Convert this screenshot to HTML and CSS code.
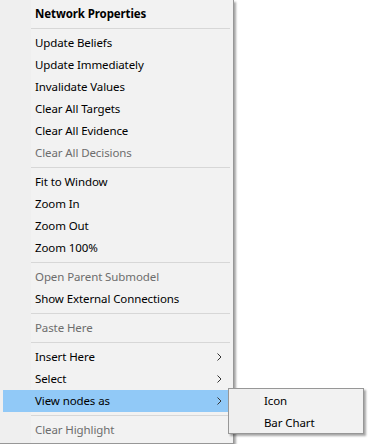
FILE: index.html
```html
<!DOCTYPE html>
<html lang="en">
<head>
    <meta charset="UTF-8">
    <meta name="viewport" content="width=device-width, initial-scale=1.0">
    <title>Context Menu</title>
    <link rel="stylesheet" href="styles.css">
</head>
<body>
    <div class="menu">
        <div class="item bold">Network Properties</div>
        <div class="sep"></div>
        <div class="item">Update Beliefs</div>
        <div class="item">Update Immediately</div>
        <div class="item">Invalidate Values</div>
        <div class="item">Clear All Targets</div>
        <div class="item">Clear All Evidence</div>
        <div class="item disabled">Clear All Decisions</div>
        <div class="sep"></div>
        <div class="item">Fit to Window</div>
        <div class="item">Zoom In</div>
        <div class="item">Zoom Out</div>
        <div class="item">Zoom 100%</div>
        <div class="sep"></div>
        <div class="item disabled">Open Parent Submodel</div>
        <div class="item">Show External Connections</div>
        <div class="sep"></div>
        <div class="item disabled">Paste Here</div>
        <div class="sep"></div>
        <div class="item has-sub">Insert Here
            <svg class="arrow" width="5" height="8" viewBox="0 0 5 8"><polyline points="0.5,0.5 4,4 0.5,7.5" fill="none" stroke="#333" stroke-width="1"/></svg>
        </div>
        <div class="item has-sub">Select
            <svg class="arrow" width="5" height="8" viewBox="0 0 5 8"><polyline points="0.5,0.5 4,4 0.5,7.5" fill="none" stroke="#333" stroke-width="1"/></svg>
        </div>
        <div class="item has-sub active">View nodes as
            <svg class="arrow" width="5" height="8" viewBox="0 0 5 8"><polyline points="0.5,0.5 4,4 0.5,7.5" fill="none" stroke="#333" stroke-width="1"/></svg>
            <div class="submenu">
                <div class="item">Icon</div>
                <div class="item">Bar Chart</div>
            </div>
        </div>
        <div class="sep"></div>
        <div class="item disabled">Clear Highlight</div>
    </div>
</body>
</html>
```

FILE: styles.css
```css
body {
    margin: 0;
    background: #ffffff;
    font-family: "Noto Sans", "Segoe UI", sans-serif;
    font-size: 11.5px;
    letter-spacing: -0.1px;
}
.menu {
    position: relative;
    width: 233px;
    padding: 3px 0 2px 0;
    background: linear-gradient(to right, #efefef 31px, #f2f2f2 31px);
    border-right: 1px solid #979797;
    border-bottom: 1px solid #979797;
    box-shadow: 2px 2px 2px rgba(0, 0, 0, 0.35);
}
.item {
    position: relative;
    display: flex;
    align-items: center;
    height: 22px;
    margin: 0 2px 0 3px;
    padding-left: 32px;
    padding-bottom: 1px;
    box-sizing: border-box;
    color: #000;
    white-space: nowrap;
}
.bold {
    font-weight: bold;
}
.disabled {
    color: #6d6d6d;
}
.active {
    background: #91c9f7;
}
.arrow {
    position: absolute;
    left: 214px;
    top: 7px;
}
.sep {
    height: 1px;
    margin: 3px 3px 3px 31px;
    background: #d7d7d7;
}
.submenu {
    position: absolute;
    left: 225px;
    top: -2px;
    width: 136px;
    padding: 1px 0 0 0;
    height: 46px;
    box-sizing: border-box;
    background: linear-gradient(to right, #efefef 31px, #f2f2f2 31px);
    border: 1px solid #979797;
    box-shadow: 2px 2px 2px rgba(0, 0, 0, 0.35);
    z-index: 2;
}
.submenu .item {
    margin: 0 2px;
    padding-left: 33px;
}
```
